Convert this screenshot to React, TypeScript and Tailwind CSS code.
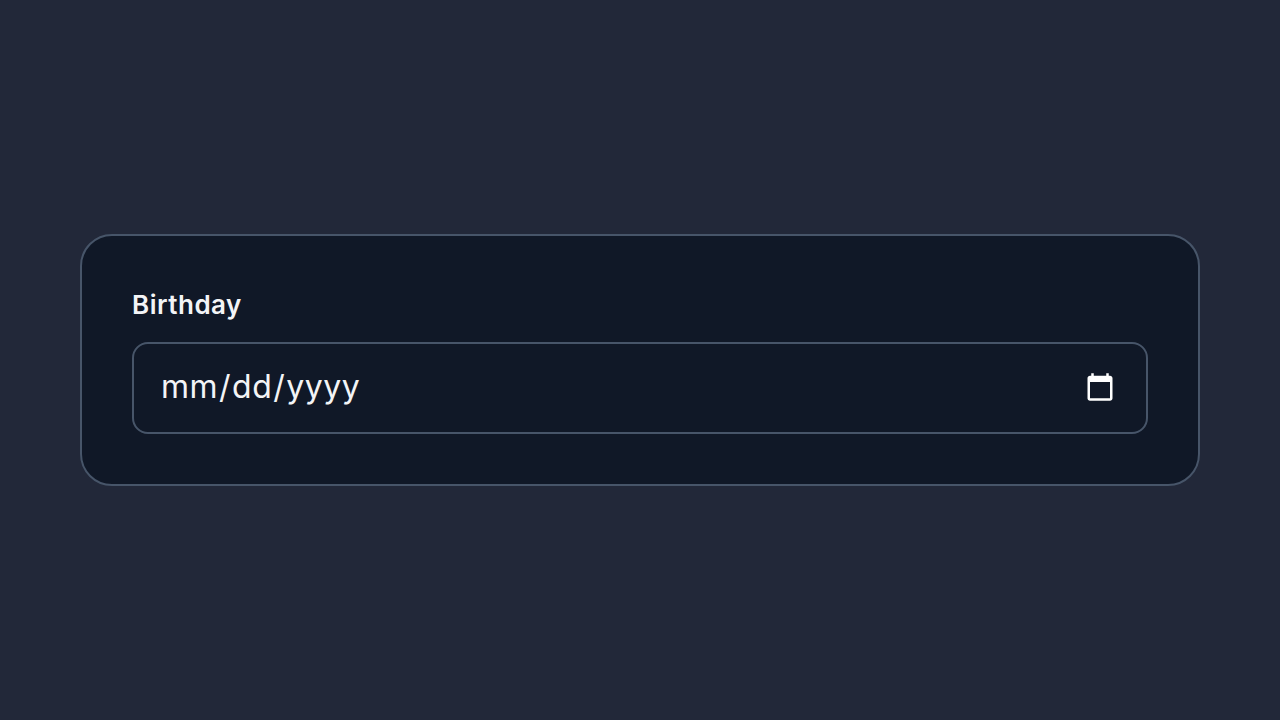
export default function App() {
  return (
    <div className="min-h-screen bg-[#222839] flex items-center justify-center px-20" style={{ fontFamily: '"Inter", "Noto Sans", sans-serif' }}>
      <div className="w-full bg-[#101827] border-2 border-[#475569] rounded-[32px] p-[50px]">
        <label htmlFor="birthday" className="block text-[26px] leading-[38px] tracking-[0.5px] font-semibold text-[#f3f4f6] mb-[18px]">
          Birthday
        </label>
        <input
          id="birthday"
          type="date"
          className="block w-full h-[92px] bg-[#101827] border-2 border-[#475569] rounded-2xl pl-[26px] pr-7 text-[32px] tracking-[0.5px] text-[#f3f4f6] [color-scheme:dark] outline-none [&::-webkit-datetime-edit]:relative [&::-webkit-datetime-edit]:top-[-1px]"
        />
      </div>
    </div>
  );
}
